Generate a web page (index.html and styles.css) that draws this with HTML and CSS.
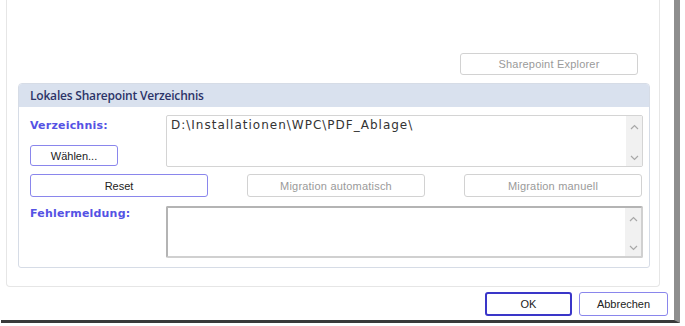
FILE: index.html
```html
<!DOCTYPE html>
<html lang="de">
<head>
  <meta charset="UTF-8" />
  <title>Sharepoint Einstellungen</title>
  <link rel="stylesheet" href="styles.css">
</head>
<body>
  <div class="fenster">
    <div class="panel">
      <div class="explorer-zeile">
        <button class="knopf gesperrt breit">Sharepoint Explorer</button>
      </div>

      <div class="gruppe">
        <div class="gruppe-kopf">Lokales Sharepoint Verzeichnis</div>
        <div class="gruppe-inhalt">
          <div class="zeile">
            <div class="links">
              <span class="label">Verzeichnis:</span>
              <button class="knopf aktiv waehlen">Wählen...</button>
            </div>
            <div class="feld">
              <div class="feld-text">D:\Installationen\WPC\PDF_Ablage\</div>
              <div class="scroll">
                <svg width="9" height="6" viewBox="0 0 9 6"><path d="M1 5 L4.5 1.5 L8 5" fill="none" stroke="#a8a8a8" stroke-width="1.2"/></svg>
                <svg width="9" height="6" viewBox="0 0 9 6"><path d="M1 1 L4.5 4.5 L8 1" fill="none" stroke="#a8a8a8" stroke-width="1.2"/></svg>
              </div>
            </div>
          </div>

          <div class="knopf-zeile">
            <button class="knopf aktiv breit">Reset</button>
            <button class="knopf gesperrt breit">Migration automatisch</button>
            <button class="knopf gesperrt breit">Migration manuell</button>
          </div>

          <div class="zeile">
            <div class="links">
              <span class="label oben">Fehlermeldung:</span>
            </div>
            <div class="feld dunkel">
              <div class="feld-text"></div>
              <div class="scroll">
                <svg width="9" height="6" viewBox="0 0 9 6"><path d="M1 5 L4.5 1.5 L8 5" fill="none" stroke="#a8a8a8" stroke-width="1.2"/></svg>
                <svg width="9" height="6" viewBox="0 0 9 6"><path d="M1 1 L4.5 4.5 L8 1" fill="none" stroke="#a8a8a8" stroke-width="1.2"/></svg>
              </div>
            </div>
          </div>
        </div>
      </div>
    </div>

    <div class="fuss">
      <button class="knopf ok">OK</button>
      <button class="knopf aktiv abbrechen">Abbrechen</button>
    </div>
  </div>
</body>
</html>
```

FILE: styles.css
```css
body {
  margin: 0;
  background: #fff;
  font-family: "Liberation Sans", Arial, sans-serif;
  font-size: 11px;
  color: #222;
}
.fenster {
  margin-left: 1px;
  width: 667px;
  height: 320px;
  padding-right: 6px;
  border-right: 6px solid #8e8e8e;
  border-bottom: 3px solid #3a3a3a;
}
.panel {
  margin-left: 5px;
  width: 654px;
  height: 287px;
  border: 1px solid #e6e6e6;
  border-top: none;
  border-radius: 0 0 4px 4px;
  box-sizing: border-box;
  padding: 0 9px 0 11px;
}
.explorer-zeile {
  display: flex;
  justify-content: flex-end;
  padding: 53px 12px 0 0;
  height: 75px;
  box-sizing: border-box;
}
.knopf {
  font-family: "Liberation Sans", Arial, sans-serif;
  font-size: 11px;
  height: 22px;
  padding: 0;
  background: #fff;
  border: 1px solid #d2d2d2;
  border-radius: 3px;
  color: #222;
}
.breit {
  width: 178px;
}
.gesperrt {
  color: #9a9a9a;
  letter-spacing: 0.2px;
}
.aktiv {
  border-color: #8a86ec;
}
.gruppe {
  margin-top: 8px;
  border: 1px solid #d6dce6;
  border-radius: 4px 4px 3px 3px;
  height: 185px;
  box-sizing: border-box;
}
.gruppe-kopf {
  background: #d9e1ee;
  height: 23px;
  line-height: 23px;
  padding-left: 11px;
  font-family: "Open Sans", sans-serif;
  font-size: 12px;
  font-weight: 600;
  letter-spacing: -0.2px;
  color: #2c3468;
  border-radius: 3px 3px 0 0;
}
.gruppe-inhalt {
  padding: 8px 6px 0 11px;
}
.zeile {
  display: flex;
}
.links {
  width: 136px;
  display: flex;
  flex-direction: column;
  justify-content: space-between;
  align-items: flex-start;
}
.label {
  font-family: "DejaVu Sans", Verdana, sans-serif;
  font-size: 11px;
  font-weight: bold;
  letter-spacing: 0.2px;
  color: #5552e4;
  padding-top: 4px;
}
.label.oben {
  padding-top: 1px;
}
.waehlen {
  width: 88px;
  height: 21px;
  margin-bottom: 1px;
}
.feld {
  flex: 1;
  height: 52px;
  display: flex;
  border: 1px solid #d4d4d4;
  border-radius: 2px;
  box-sizing: border-box;
}
.feld.dunkel {
  border: 2px solid #b4b4b4;
  border-right-color: #d0d0d0;
  border-bottom-color: #d0d0d0;
}
.feld-text {
  flex: 1;
  font-family: "DejaVu Sans", Verdana, sans-serif;
  font-size: 12px;
  letter-spacing: 1px;
  color: #333;
  padding: 2px 0 0 4px;
}
.scroll {
  width: 16px;
  background: #f1f1f1;
  display: flex;
  flex-direction: column;
  justify-content: space-between;
  align-items: center;
  padding: 8px 0 5px;
}
.knopf-zeile {
  display: flex;
  gap: 39px;
  margin: 7px 0 9px;
}
.knopf-zeile .knopf {
  height: 23px;
}
.fuss {
  display: flex;
  justify-content: flex-end;
  gap: 7px;
  padding-top: 5px;
}
.ok {
  width: 87px;
  height: 24px;
  border: 2px solid #3a36c8;
}
.abbrechen {
  width: 89px;
  height: 24px;
}
```
